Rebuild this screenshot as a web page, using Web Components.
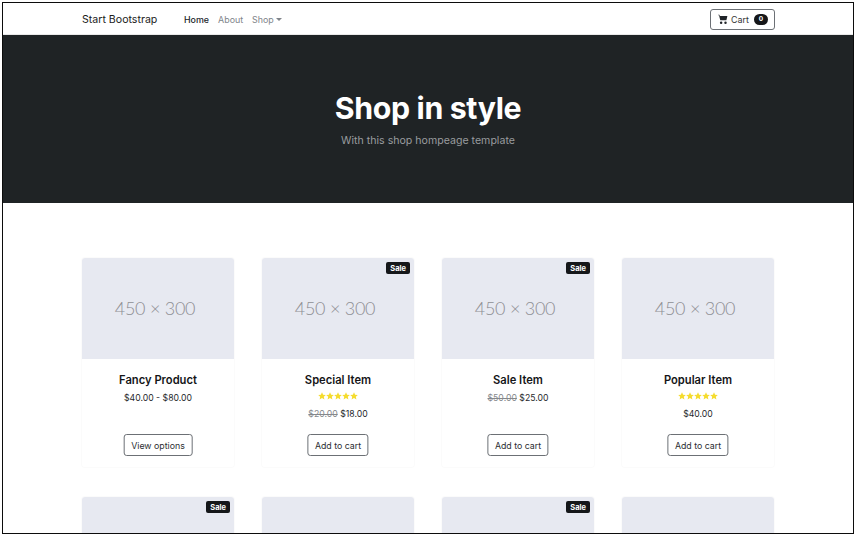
<!DOCTYPE html>
<html><head><meta charset="utf-8">
<style>
html,body{margin:0;padding:0;background:#fff}
body{font-family:Inter,"Liberation Sans",sans-serif;color:#212529}
s{color:#85888c}
</style></head><body>
<template id="t-page"><style>
:host{display:flex;flex-direction:column;box-sizing:border-box;width:852px;height:532px;margin:2px;overflow:hidden;border:1px solid #0c0c0c;background:#fff}
</style><slot></slot></template>

<template id="t-nav"><style>
:host{display:flex;align-items:center;flex:none;height:30px;padding:1px 78px 0 79px;background:#fff;border-bottom:1px solid #e9e9e9}
.brand{font-size:10.6px;color:#1b1b1b;width:102px}
nav{display:flex;align-items:center;gap:9px;flex:1;font-size:8.9px;color:#80848a}
.on{color:#212529;font-weight:500}
.caret{display:inline-block;margin-left:2px;vertical-align:2px;border-top:3px solid #80848a;border-left:3px solid transparent;border-right:3px solid transparent}
.cart{display:flex;align-items:center;box-sizing:border-box;height:21px;width:65px;padding:0 0 0 7px;border:1px solid #6c7075;border-radius:3px;font-size:8.9px;color:#333}
svg{width:10px;height:10px;margin-right:3px}
.n{margin-left:5px;width:14px;height:11px;border-radius:6px;background:#161719;color:#fff;font-size:6.5px;font-weight:700;display:flex;align-items:center;justify-content:center}
</style>
<span class="brand">Start Bootstrap</span>
<nav><span class="on">Home</span><span>About</span><span>Shop<i class="caret"></i></span></nav>
<span class="cart"><svg viewBox="0 0 16 16"><path fill="#212529" d="M0 1.5A.5.5 0 0 1 .5 1H2a.5.5 0 0 1 .49.4L2.89 3H14.5a.5.5 0 0 1 .49.6l-1.5 6a.5.5 0 0 1-.49.4H4a.5.5 0 0 1-.49-.4L1.61 2H.5a.5.5 0 0 1-.5-.5zM5 12a2 2 0 1 0 0 4 2 2 0 0 0 0-4zm7 0a2 2 0 1 0 0 4 2 2 0 0 0 0-4z"/></svg>Cart<span class="n">0</span></span></template>

<template id="t-hero"><style>
:host{display:flex;flex-direction:column;align-items:center;flex:none;height:168px;box-sizing:border-box;padding-top:54px;background:#1f2325;color:#fff}
h1{margin:0;font-size:30.3px;line-height:38px;font-weight:700;letter-spacing:-.35px}
p{margin:6px 0 0;font-size:10.6px;line-height:16px;color:#999c9f}
</style><h1><slot name="title"></slot></h1><p><slot name="sub"></slot></p></template>

<template id="t-grid"><style>
:host{display:grid;grid-template-columns:repeat(4,152px);column-gap:28px;row-gap:30px;padding:55px 0 0 79px;flex:none}
</style><slot></slot></template>

<template id="t-card"><style>
:host{display:flex;flex-direction:column;position:relative;height:209px;box-shadow:0 0 0 1px #fbfbfb;border-radius:3px;font-size:8.7px;color:#26282b;text-align:center}
.img{height:101px;box-sizing:border-box;padding:0 6px 1px 0;flex:none;background:#e7e9f1;border-radius:3px 3px 0 0;display:flex;align-items:center;justify-content:center;font-family:Lato,"Open Sans",sans-serif;font-weight:300;font-size:18px;letter-spacing:-.25px;color:#8f8f94}
.badge{position:absolute;top:4px;right:4px;height:12px;padding:0 4px;border-radius:2px;background:#15171a;color:#fff;font-size:7.5px;font-weight:700;line-height:13px}
:host(:not([sale])) .badge{display:none}
.body{flex:1;display:flex;flex-direction:column;align-items:center;padding-top:14px}
:host([stub]) .body,:host([stub]) .label{display:none}
h5{margin:0;font-size:11.2px;line-height:14px;font-weight:600;color:#141517}
.stars{display:none;margin-top:5px;height:8px;line-height:0}
:host([stars]) .stars{display:block}
.stars svg{width:40px;height:8px;display:block}
.price{margin-top:5px;line-height:13px}
:host([stars]) .price{margin-top:8px}
.btn{position:absolute;top:176px;left:50%;transform:translateX(-50%);white-space:nowrap;box-sizing:border-box;height:22px;padding:0 6.5px;border:1px solid #6c7075;border-radius:3px;line-height:21px;font-size:8.8px;color:#2c2e31}
</style>
<div class="img"><span class="label">450 × 300</span></div><span class="badge">Sale</span>
<div class="body"><h5><slot name="name"></slot></h5>
<div class="stars"><svg viewBox="0 0 40 8"><g fill="#f5dc2e"><path d="M4 .2l1.1 2.5 2.7.3-2 1.8.6 2.7L4 6.1 1.6 7.5l.6-2.7-2-1.8 2.7-.3z"/><path transform="translate(8)" d="M4 .2l1.1 2.5 2.7.3-2 1.8.6 2.7L4 6.1 1.6 7.5l.6-2.7-2-1.8 2.7-.3z"/><path transform="translate(16)" d="M4 .2l1.1 2.5 2.7.3-2 1.8.6 2.7L4 6.1 1.6 7.5l.6-2.7-2-1.8 2.7-.3z"/><path transform="translate(24)" d="M4 .2l1.1 2.5 2.7.3-2 1.8.6 2.7L4 6.1 1.6 7.5l.6-2.7-2-1.8 2.7-.3z"/><path transform="translate(32)" d="M4 .2l1.1 2.5 2.7.3-2 1.8.6 2.7L4 6.1 1.6 7.5l.6-2.7-2-1.8 2.7-.3z"/></g></svg></div>
<div class="price"><slot name="price"></slot></div>
<span class="btn"><slot name="action"></slot></span></div></template>

<shop-page>
<shop-nav></shop-nav>
<shop-hero><span slot="title">Shop in style</span><span slot="sub">With this shop hompeage template</span></shop-hero>
<shop-grid>
<shop-card><span slot="name">Fancy Product</span><span slot="price">$40.00 - $80.00</span><span slot="action">View options</span></shop-card>
<shop-card sale stars><span slot="name">Special Item</span><span slot="price"><s>$20.00</s> $18.00</span><span slot="action">Add to cart</span></shop-card>
<shop-card sale><span slot="name">Sale Item</span><span slot="price"><s>$50.00</s> $25.00</span><span slot="action">Add to cart</span></shop-card>
<shop-card stars><span slot="name">Popular Item</span><span slot="price">$40.00</span><span slot="action">Add to cart</span></shop-card>
<shop-card stub sale></shop-card>
<shop-card stub></shop-card>
<shop-card stub sale></shop-card>
<shop-card stub></shop-card>
</shop-grid>
</shop-page>
<script>
const def=(tag,id)=>customElements.define(tag,class extends HTMLElement{constructor(){super();this.attachShadow({mode:'open'}).appendChild(document.getElementById(id).content.cloneNode(true));}});
def('shop-page','t-page');def('shop-nav','t-nav');def('shop-hero','t-hero');def('shop-grid','t-grid');def('shop-card','t-card');
</script>
</body></html>
